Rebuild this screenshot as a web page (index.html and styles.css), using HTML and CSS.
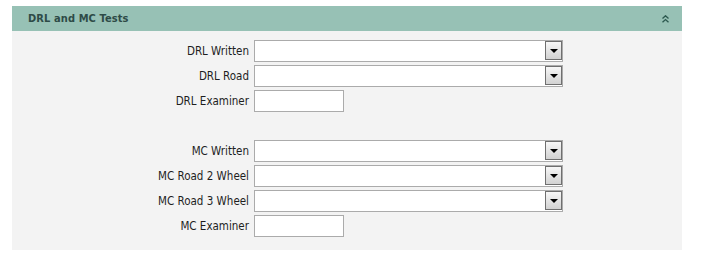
FILE: index.html
```html
<!DOCTYPE html>
<html>
<head>
<meta charset="utf-8">
<link rel="stylesheet" href="styles.css">
</head>
<body>
<div class="panel">
  <div class="panel-header">
    <span class="panel-title">DRL and MC Tests</span>
    <svg class="collapse-icon" width="7" height="8" viewBox="0 0 7 8">
      <path d="M0.5 3.5 L3.5 0.8 L6.5 3.5 M0.5 7.3 L3.5 4.6 L6.5 7.3" fill="none" stroke="#2d5a50" stroke-width="1.4"/>
    </svg>
  </div>
  <div class="panel-body">
    <div class="form-grid">
      <label class="field-label">DRL Written</label>
      <div class="select"><span class="select-btn"><span class="tri"></span></span></div>
      <label class="field-label">DRL Road</label>
      <div class="select"><span class="select-btn"><span class="tri"></span></span></div>
      <label class="field-label">DRL Examiner</label>
      <div class="text-input"></div>
      <div class="spacer"></div>
      <div class="spacer"></div>
      <label class="field-label">MC Written</label>
      <div class="select"><span class="select-btn"><span class="tri"></span></span></div>
      <label class="field-label">MC Road 2 Wheel</label>
      <div class="select"><span class="select-btn"><span class="tri"></span></span></div>
      <label class="field-label">MC Road 3 Wheel</label>
      <div class="select"><span class="select-btn"><span class="tri"></span></span></div>
      <label class="field-label">MC Examiner</label>
      <div class="text-input"></div>
    </div>
  </div>
</div>
</body>
</html>
```

FILE: styles.css
```css
html, body {
  margin: 0;
  padding: 0;
  background: #ffffff;
}
body {
  padding: 6px 35px 0 12px;
  font-family: "DejaVu Sans Condensed", "DejaVu Sans", sans-serif;
  font-size: 11px;
  color: #1e1e1e;
}
.panel {
  width: 670px;
}
.panel-header {
  height: 25px;
  background: #97c1b5;
  display: flex;
  align-items: center;
  justify-content: space-between;
  padding: 0 13px 0 16px;
  box-sizing: border-box;
}
.panel-title {
  font-weight: bold;
  color: #2e4b47;
  font-size: 11px;
  letter-spacing: 0.1px;
}
.collapse-icon {
  display: block;
}
.panel-body {
  background: #f3f3f3;
  padding: 9px 0 13px 0;
}
.form-grid {
  display: grid;
  grid-template-columns: 237px auto;
  grid-auto-rows: 22px;
  column-gap: 5px;
  row-gap: 3px;
  justify-content: start;
}
.field-label {
  display: flex;
  align-items: center;
  justify-content: flex-end;
  white-space: nowrap;
  font-size: 11.5px;
}
.select {
  width: 309px;
  height: 22px;
  box-sizing: border-box;
  border: 1px solid #ababab;
  background: #fff;
  display: flex;
  justify-content: flex-end;
  align-items: flex-start;
}
.select-btn {
  width: 17px;
  height: 19px;
  box-sizing: border-box;
  border: 1px solid #6f6f6f;
  background: linear-gradient(#f7f7f7, #d2d2d2);
  display: flex;
  align-items: center;
  justify-content: center;
}
.tri {
  width: 0;
  height: 0;
  border-left: 4px solid transparent;
  border-right: 4px solid transparent;
  border-top: 4px solid #000;
}
.text-input {
  width: 90px;
  height: 22px;
  box-sizing: border-box;
  border: 1px solid #ababab;
  background: #fff;
}
```
